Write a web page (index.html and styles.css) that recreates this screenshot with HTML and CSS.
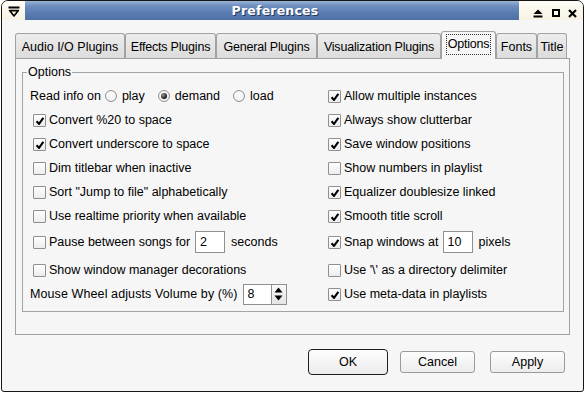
FILE: index.html
```html
<!DOCTYPE html>
<html>
<head>
<meta charset="utf-8">
<link rel="stylesheet" href="styles.css">
</head>
<body>
<div class="window">
  <div class="titlebar">
    <div class="tb-left">
      <svg class="menu-ico" width="12" height="11" viewBox="0 0 12 11"><rect x="0.5" y="0.5" width="11" height="2" fill="#000"/><path d="M1.6 4.6 L10.4 4.6 L6 10 Z" fill="#fff3cf" stroke="#000" stroke-width="1.6" stroke-linejoin="round"/></svg>
    </div>
    <div class="tb-title">Preferences</div>
    <div class="tb-right">
      <svg width="10" height="9" viewBox="0 0 10 9"><path d="M5 0.5 L9.5 5 L0.5 5 Z" fill="#000"/><rect x="0.5" y="6.5" width="9" height="2" fill="#000"/></svg>
      <svg width="8" height="8" viewBox="0 0 8 8"><rect x="1" y="1" width="6" height="6" fill="none" stroke="#000" stroke-width="2"/></svg>
      <svg width="9" height="9" viewBox="0 0 9 9"><path d="M1 1 L8 8 M8 1 L1 8" stroke="#000" stroke-width="2.2"/></svg>
    </div>
  </div>
  <div class="content">
    <div class="notebook">
      <div class="tabs">
        <div class="tab t-audio">Audio I/O Plugins</div>
        <div class="tab t-effects">Effects Plugins</div>
        <div class="tab t-general">General Plugins</div>
        <div class="tab t-vis">Visualization Plugins</div>
        <div class="tab t-options active"><span class="focus">Options</span></div>
        <div class="tab t-fonts">Fonts</div>
        <div class="tab t-title">Title</div>
      </div>
      <div class="panel">
        <fieldset class="frame">
          <legend>Options</legend>
          <div class="grid">
            <div class="row">
              <span>Read info on</span>
              <span class="radio first"></span><span>play</span>
              <span class="radio on"></span><span>demand</span>
              <span class="radio"></span><span>load</span>
            </div>
            <div class="row cbrow"><span class="cb on"></span><span>Allow multiple instances</span></div>

            <div class="row cbrow"><span class="cb on"></span><span>Convert %20 to space</span></div>
            <div class="row cbrow"><span class="cb on"></span><span>Always show clutterbar</span></div>

            <div class="row cbrow"><span class="cb on"></span><span>Convert underscore to space</span></div>
            <div class="row cbrow"><span class="cb on"></span><span>Save window positions</span></div>

            <div class="row cbrow"><span class="cb"></span><span>Dim titlebar when inactive</span></div>
            <div class="row cbrow"><span class="cb"></span><span>Show numbers in playlist</span></div>

            <div class="row cbrow"><span class="cb"></span><span>Sort "Jump to file" alphabetically</span></div>
            <div class="row cbrow"><span class="cb on"></span><span>Equalizer doublesize linked</span></div>

            <div class="row cbrow"><span class="cb"></span><span>Use realtime priority when available</span></div>
            <div class="row cbrow"><span class="cb on"></span><span>Smooth title scroll</span></div>

            <div class="row cbrow"><span class="cb"></span><span>Pause between songs for</span><span class="entry e-pause">2</span><span>seconds</span></div>
            <div class="row cbrow"><span class="cb on"></span><span>Snap windows at</span><span class="entry e-snap">10</span><span>pixels</span></div>

            <div class="row cbrow"><span class="cb"></span><span>Show window manager decorations</span></div>
            <div class="row cbrow"><span class="cb"></span><span>Use '\' as a directory delimiter</span></div>

            <div class="row">
              <span class="mw">Mouse Wheel adjusts Volume by (%)</span>
              <span class="spin"><span class="entry e-vol">8</span><span class="arrows"><svg width="9" height="16" viewBox="0 0 9 16"><path d="M4.5 1.5 L8.5 6.5 L0.5 6.5 Z" fill="#000"/><path d="M0.5 9.5 L8.5 9.5 L4.5 14.5 Z" fill="#000"/></svg></span></span>
            </div>
            <div class="row cbrow"><span class="cb on"></span><span>Use meta-data in playlists</span></div>
          </div>
        </fieldset>
      </div>
    </div>
    <div class="actions">
      <button class="btn default">OK</button>
      <button class="btn cancel">Cancel</button>
      <button class="btn apply">Apply</button>
    </div>
  </div>
</div>
</body>
</html>
```

FILE: styles.css
```css
html, body {
  margin: 0;
  padding: 0;
  background: #ffffff;
}
body {
  font-family: "Liberation Sans", Arial, sans-serif;
  font-size: 12.5px;
  color: #000;
}
.window {
  margin-left: 1px;
  width: 583px;
  height: 392px;
  box-sizing: border-box;
  border: 1px solid #161616;
  border-radius: 7px 7px 3px 3px;
  background: #f6f6f6;
  overflow: hidden;
  display: flex;
  flex-direction: column;
}
.titlebar {
  height: 19px;
  display: flex;
  flex: none;
}
.tb-left {
  width: 23px;
  background: linear-gradient(#fffdf6, #f7f2e3);
  display: flex;
  align-items: flex-start;
  padding: 5px 0 0 6px;
  box-sizing: border-box;
}
.tb-title {
  flex: 1;
  background: linear-gradient(#9bb4d8 0%, #6f8fc0 25%, #5b7db2 60%, #4d70a5 100%);
  color: #fff;
  font-family: "DejaVu Sans", sans-serif;
  font-weight: bold;
  font-size: 12.5px;
  letter-spacing: 0.2px;
  text-align: center;
  line-height: 19px;
  text-shadow: 1px 1px 0 #23395e;
  padding-left: 6px;
}
.tb-right {
  width: 64px;
  background: linear-gradient(#fffdf6, #f7f2e3);
  display: flex;
  align-items: flex-start;
  padding: 7px 0 0 14px;
  box-sizing: border-box;
}
.tb-right svg:nth-child(1) { margin-top: 1px; }
.tb-right svg:nth-child(2) { margin: 1px 0 0 9px; }
.tb-right svg:nth-child(3) { margin: 1px 0 0 8px; }

.content {
  flex: 1;
  padding: 11px 0 0 13px;
  display: flex;
  flex-direction: column;
}
.notebook {
  width: 555px;
}
.tabs {
  display: flex;
  align-items: flex-end;
  height: 28px;
  margin-bottom: -1px;
  position: relative;
  z-index: 1;
}
.tab {
  height: 25px;
  margin-bottom: 1px;
  box-sizing: border-box;
  border: 1px solid #a2a2a2;
  border-bottom: none;
  border-radius: 3px 3px 0 0;
  background: linear-gradient(#ededed, #dcdcdc);
  padding-top: 1px;
  display: flex;
  align-items: center;
  justify-content: center;
  white-space: nowrap;
  flex: none;
}
.t-audio { width: 110px; }
.t-effects { width: 91px; letter-spacing: -0.2px; }
.t-general { width: 101px; letter-spacing: -0.2px; }
.t-vis { width: 124px; letter-spacing: -0.2px; }
.t-options { width: 55px; }
.t-fonts { width: 41px; }
.t-title { width: 30px; }
.tab.active {
  height: 28px;
  margin-bottom: 0;
  background: #f6f6f6;
  padding: 0 0 3px 0;
}
.focus {
  border: 1px dotted #333;
  padding: 2px 1px 3px 1px;
  letter-spacing: -0.2px;
}
.panel {
  height: 277px;
  box-sizing: border-box;
  border: 1px solid #a2a2a2;
  padding: 6px 5px 0 6px;
}
.frame {
  margin: 0;
  border: 1px solid #a5a5a5;
  padding: 5px 0 7px 7px;
}
.frame legend {
  line-height: 14px;
  padding: 0 1px;
  margin-left: -3px;
}
.grid {
  display: grid;
  grid-template-columns: 295px auto;
  grid-template-rows: 24px 24px 24px 24px 24px 24px 28px 28px 20px;
}
.row {
  display: flex;
  align-items: center;
  white-space: nowrap;
}
.cbrow {
  padding-left: 3px;
}
.mw {
  letter-spacing: 0.1px;
}
.cb {
  width: 13px;
  height: 13px;
  box-sizing: border-box;
  border: 1px solid #8f8f8f;
  border-radius: 1px;
  background: linear-gradient(#ffffff, #ececec);
  margin-right: 3px;
  flex: none;
  position: relative;
}
.cb.on::after {
  content: "";
  position: absolute;
  left: 2px;
  top: 2px;
  width: 8px;
  height: 8px;
  background: no-repeat center / contain url("data:image/svg+xml,%3Csvg xmlns='http://www.w3.org/2000/svg' viewBox='0 0 8 8'%3E%3Cpath d='M0.6 4.3 L3 6.9 L7.4 0.8' fill='none' stroke='%23000' stroke-width='2.1'/%3E%3C/svg%3E");
}
.radio {
  width: 12px;
  height: 12px;
  box-sizing: border-box;
  border: 1px solid #8f8f8f;
  border-radius: 50%;
  background: radial-gradient(circle at 40% 35%, #ffffff, #e9e9e9);
  margin: 0 5px 0 13px;
  flex: none;
  position: relative;
}
.radio.first {
  margin-left: 4px;
}
.radio.on::after {
  content: "";
  position: absolute;
  left: 2px;
  top: 2px;
  width: 6px;
  height: 6px;
  border-radius: 50%;
  background: radial-gradient(circle at 35% 35%, #9a9a9a, #111 70%);
}
.entry {
  height: 22px;
  box-sizing: border-box;
  border: 1px solid #8f8f8f;
  background: #fff;
  display: flex;
  align-items: center;
  padding-left: 4px;
  flex: none;
}
.e-pause {
  width: 30px;
  margin: 0 6px 0 5px;
}
.e-snap {
  width: 30px;
  margin: 0 6px 0 4px;
}
.spin {
  display: flex;
  margin-left: 5px;
}
.e-vol {
  width: 29px;
  height: 21px;
}
.arrows {
  width: 15px;
  height: 21px;
  box-sizing: border-box;
  border: 1px solid #8f8f8f;
  border-left: none;
  background: linear-gradient(#fafafa, #e4e4e4);
  display: flex;
  align-items: center;
  justify-content: center;
}
.actions {
  display: flex;
  align-items: center;
  height: 39px;
  margin-top: 7px;
  padding-left: 293px;
}
.btn {
  font-family: "Liberation Sans", Arial, sans-serif;
  font-size: 12.5px;
  color: #000;
  width: 75px;
  height: 22px;
  box-sizing: border-box;
  border: 1px solid #9a9a9a;
  border-radius: 3px;
  background: linear-gradient(#fdfdfd, #ececec);
  padding: 0;
  margin: 0;
}
.btn.default {
  width: 80px;
  height: 26px;
  border: 1px solid #1e1e1e;
  border-radius: 4px;
}
.btn.cancel {
  margin-left: 12px;
}
.btn.apply {
  margin-left: 15px;
}
```
